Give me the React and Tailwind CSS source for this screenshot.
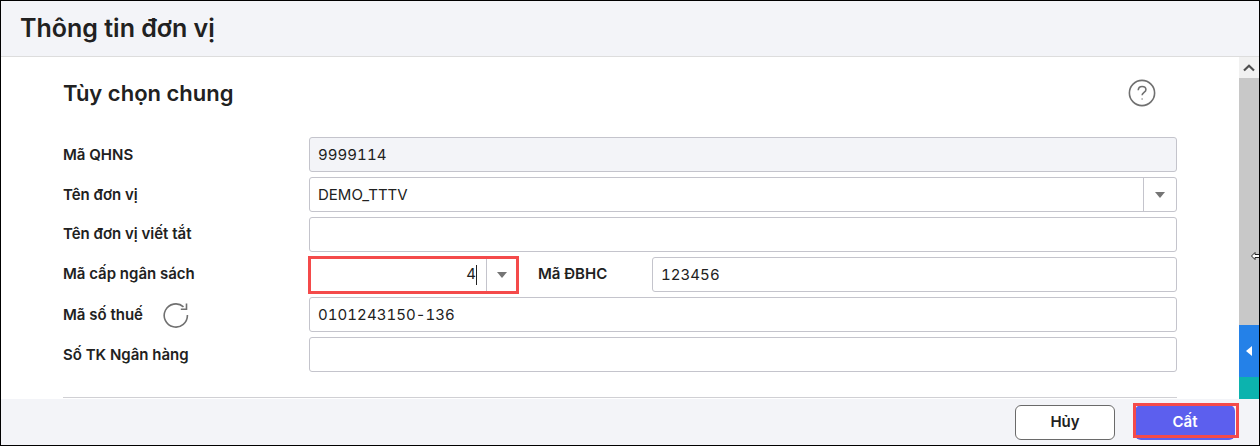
import React from "react";

const Caret = () => (
  <svg width="10" height="6" viewBox="0 0 10 6" className="block"><path d="M0 0H10L5 6Z" fill="#757575" /></svg>
);

const Box = ({ children, className = "bg-white" }) => (
  <div className={`h-[35px] rounded-[3px] border border-[#c4c4cc] flex items-center text-[15px] text-[#212121] overflow-hidden ${className}`}>{children}</div>
);

const Row = ({ label, extra, children, labelClass = "" }) => (
  <div className="flex h-[35px] items-center">
    <div className="w-[246px] shrink-0 flex items-center text-[15px] font-semibold text-[#212121]">
      <span className={labelClass}>{label}</span>
      {extra}
    </div>
    <div className="w-[868px] shrink-0 flex">{children}</div>
  </div>
);

export default function App() {
  return (
    <div className="relative w-[1260px] h-[446px] border border-black bg-white flex flex-col overflow-hidden font-['Inter',sans-serif]">
      <header className="h-[56px] shrink-0 bg-[#f3f4f8] border-b border-[#dddddd] flex items-center pl-[19px]">
        <h1 className="text-[25px] leading-none font-semibold text-[#212121] -mt-[1px]">Thông tin đơn vị</h1>
      </header>
      <div className="flex-1 min-h-0 flex overflow-hidden">
        <main className="flex-1 min-w-0 overflow-hidden pl-[62px]">
          <div className="h-[80px] flex items-start pt-[21px] relative">
            <h2 className="text-[22px] leading-[30px] font-semibold text-[#212121]">Tùy chọn chung</h2>
            <svg className="absolute left-[1065px] top-[22px]" width="28" height="28" viewBox="0 0 28 28" fill="none" stroke="#707070" strokeWidth="1.6">
              <circle cx="14" cy="14" r="12.6" />
              <path d="M10.2 11.2c.2-2.4 1.9-3.7 3.9-3.7 2.1 0 3.8 1.3 3.8 3.2 0 2.7-3.8 2.7-3.8 5.6" />
              <circle cx="14.1" cy="20" r="0.7" fill="#707070" stroke="none" />
            </svg>
          </div>
          <div className="flex flex-col gap-[5px]">
            <Row label="Mã QHNS" labelClass="mt-[1px]">
              <Box className="w-full bg-[#f3f4f8] px-[8px] pt-[2px] tabular-nums tracking-[0.05px]">9999114</Box>
            </Row>
            <Row label="Tên đơn vị" labelClass="mt-[1px]">
              <Box className="w-full bg-white">
                <span className="flex-1 pl-[8px] pt-[2px]">DEMO_TTTV</span>
                <span className="w-[33px] h-full border-l border-[#c4c4cc] flex items-center justify-center"><Caret /></span>
              </Box>
            </Row>
            <Row label="Tên đơn vị viết tắt" labelClass="-mt-[1px]"><Box className="w-full bg-white" /></Row>
            <Row label="Mã cấp ngân sách" labelClass="-mt-[1px]">
              <div className="flex items-center w-full">
                <div className="w-[211px] h-[38px] border-[3px] border-[#f44a4a] -ml-[1px] flex items-center bg-white text-[15px] text-[#212121] -my-[2px]">
                  <span className="flex-1 text-right pr-[9px] flex justify-end items-center">4<span className="w-px h-[20px] bg-[#212121] inline-block" /></span>
                  <span className="w-[30px] h-full border-l border-[#c4c4cc] flex items-center justify-center"><Caret /></span>
                </div>
                <span className="ml-[19px] w-[114px] shrink-0 text-[15px] font-semibold text-[#212121]">Mã ĐBHC</span>
                <Box className="flex-1 bg-white px-[8px] pt-[2px] tabular-nums tracking-[0.05px]">123456</Box>
              </div>
            </Row>
            <Row
              label="Mã số thuế"
              labelClass="mt-[1px]"
              extra={
                <svg className="ml-[20px]" width="26" height="26" viewBox="0 0 26 26" fill="none" stroke="#707070" strokeWidth="1.6">
                  <path d="M20.5 4.8A11.6 11.6 0 1 0 24.4 13" />
                  <path d="M23.5 1.5V7.2H17.8" strokeLinejoin="miter" />
                </svg>
              }
            >
              <Box className="w-full bg-white px-[8px] pt-[2px] tabular-nums tracking-[0.05px]">0101243150-136</Box>
            </Row>
            <Row label="Số TK Ngân hàng" labelClass="mt-[2px]"><Box className="w-full bg-white" /></Row>
          </div>
          <div className="mt-[25px] w-[1114px] border-t border-[#d0d0d4] h-px" />
        </main>
        <aside className="w-[20px] shrink-0 flex flex-col bg-[#c8c8c8]">
          <div className="h-[21px] bg-[#f1f1f1] flex items-center justify-center">
            <svg width="12" height="8" viewBox="0 0 12 8"><path d="M1 6.5L6 1.8L11 6.5" fill="none" stroke="#4f4f4f" strokeWidth="2.2" /></svg>
          </div>
          <div className="flex-1" />
          <div className="h-[52px] bg-[#2481e8] flex items-center justify-center">
            <svg width="6" height="10" viewBox="0 0 6 10"><path d="M6 0V10L0 5Z" fill="#ffffff" /></svg>
          </div>
          <div className="h-[22px] bg-[#0cb3ae]" />
        </aside>
      </div>
      <footer className="h-[46px] shrink-0 bg-[#f3f4f8] flex items-start pt-[6px] justify-end pr-[24px] gap-[20px]">
        <button className="w-[100px] h-[35px] rounded-[6px] border border-[#6a6a6a] bg-white text-[15px] font-semibold text-[#212121]">Hủy</button>
        <button className="relative w-[100px] h-[35px] rounded-[6px] bg-[#5c5fee] text-[15px] font-semibold text-white">
          Cất
          <span className="absolute left-[-2px] top-[-2px] w-[106px] h-[35px] border-[3px] border-[#f44a4a]" />
        </button>
      </footer>
      <svg className="absolute left-[1250px] top-[249px]" width="10" height="12" viewBox="0 0 10 12">
        <path d="M0.5 6L4 2.5V4.5H9.5V7.5H4V9.5Z" fill="#fff" stroke="#222" strokeWidth="1" />
      </svg>
    </div>
  );
}
